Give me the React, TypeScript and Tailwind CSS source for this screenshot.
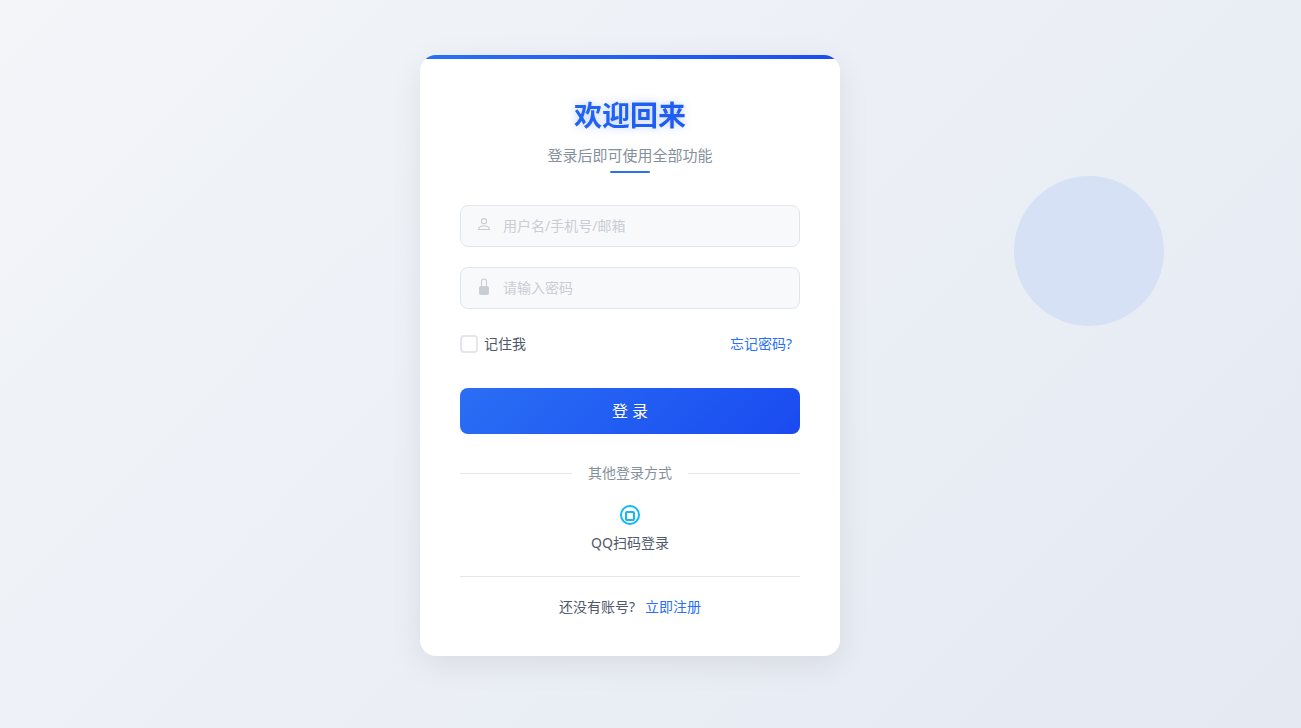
import type { ReactNode } from "react";

function UserIcon() {
  return (
    <svg viewBox="0 0 14 18" className="h-[18px] w-3.5" fill="none" stroke="currentColor" strokeWidth="1.1" aria-hidden="true">
      <circle cx="7" cy="5.2" r="2.6" />
      <path d="M1.500 13.500c0-2.200 2-3.500 5.500-3.500s5.500 1.300 5.500 3.500z" strokeLinejoin="round" />
    </svg>
  );
}

function LockIcon() {
  return (
    <svg viewBox="0 0 14 18" className="h-[18px] w-3.5" fill="none" aria-hidden="true">
      <path d="M4.500 9V3.500a2.500 2.500 0 0 1 5 0V9" stroke="currentColor" strokeWidth="1.1" />
      <rect x="2" y="8" width="10" height="9" rx="2" fill="currentColor" />
    </svg>
  );
}

function ScanIcon() {
  return (
    <svg viewBox="0 0 20 20" className="h-5 w-5" fill="none" stroke="#12b7f5" strokeWidth="2" aria-hidden="true">
      <circle cx="10" cy="10" r="9" />
      <rect x="6" y="7" width="8" height="8" rx="1" />
    </svg>
  );
}

type FieldProps = { id: string; label: string; type: string; icon: ReactNode };

function Field({ id, label, type, icon }: FieldProps) {
  return (
    <div className="flex h-[42px] items-center gap-3 rounded-lg border border-[#e2e5ea] bg-[#f8f9fb] px-4 text-[#c9cdd4]">
      <label htmlFor={id} aria-label={label} className="flex h-6 items-start pt-0.5">
        {icon}
      </label>
      <input
        id={id}
        type={type}
        placeholder={label}
        className="min-w-0 flex-1 bg-transparent text-sm text-[#4b5563] outline-none placeholder:text-[#c9cdd4]"
      />
    </div>
  );
}

export default function App() {
  return (
    <main className="relative min-h-screen overflow-hidden bg-[linear-gradient(135deg,#f3f5f9_0%,#e4e9f2_100%)] pt-[55px] pr-[41px] pb-16 font-['Noto_Sans','Noto_Sans_CJK_SC',sans-serif]">
      <div className="absolute top-44 right-[137px] h-[150px] w-[150px] rounded-full bg-[#d7e1f5]" />
      <section className="relative mx-auto w-full max-w-[420px] overflow-hidden rounded-2xl bg-white px-10 pt-10 pb-[39px] shadow-[0_8px_32px_rgba(0,0,0,0.08)]">
        <div className="absolute inset-x-0 top-0 h-1 bg-linear-to-r from-[#2970f6] to-[#1b4df1]" />
        <header className="flex flex-col items-center">
          <h1 className="w-full bg-linear-135 from-[#2970f6] to-[#1b4df1] bg-clip-text text-center text-[28px] leading-10 font-bold text-transparent [text-shadow:0_0_8px_rgba(37,99,246,0.3)]">
            欢迎回来
          </h1>
          <p className="mt-2 text-[15px] leading-6 text-[#86909c]">登录后即可使用全部功能</p>
          <div className="mt-1 h-0.5 w-10 rounded-full bg-[#2970f6]" />
        </header>

        <form className="mt-8" onSubmit={(event) => event.preventDefault()}>
          <div className="flex flex-col gap-5">
            <Field id="account" label="用户名/手机号/邮箱" type="text" icon={<UserIcon />} />
            <Field id="password" label="请输入密码" type="password" icon={<LockIcon />} />
          </div>
          <div className="mt-[25px] flex h-5 items-center justify-between text-sm leading-5">
            <label className="flex items-center gap-1.5 text-[#4e5969]">
              <input
                type="checkbox"
                className="h-[18px] w-[18px] appearance-none rounded border-2 border-[#e5e6eb] bg-white checked:border-[#2970f6] checked:bg-[#2970f6]"
              />
              记住我
            </label>
            <a href="#forgot" className="px-2 text-[#2970f6]">
              忘记密码?
            </a>
          </div>
          <button
            type="submit"
            className="mt-[34px] h-[46px] w-full rounded-lg bg-linear-135 from-[#2b6ef4] to-[#1b4af0] text-base text-white [text-shadow:0_1px_2px_rgba(0,0,0,0.1)]"
          >
            登 录
          </button>
        </form>

        <div className="mt-[29px] flex items-center gap-4 text-sm leading-5 text-[#86909c]">
          <div className="h-px flex-1 bg-[#e5e6eb]" />
          <span>其他登录方式</span>
          <div className="h-px flex-1 bg-[#e5e6eb]" />
        </div>

        <div className="mt-[22px] flex justify-center">
          <button type="button" className="flex flex-col items-center gap-2 text-sm leading-5 text-[#4e5969]">
            <ScanIcon />
            QQ扫码登录
          </button>
        </div>

        <footer className="mt-[23px] flex justify-center gap-2.5 border-t border-[#e5e6eb] pt-5 text-sm leading-5 text-[#4e5969]">
          <span>还没有账号?</span>
          <a href="#register" className="text-[#2970f6]">
            立即注册
          </a>
        </footer>
      </section>
    </main>
  );
}
